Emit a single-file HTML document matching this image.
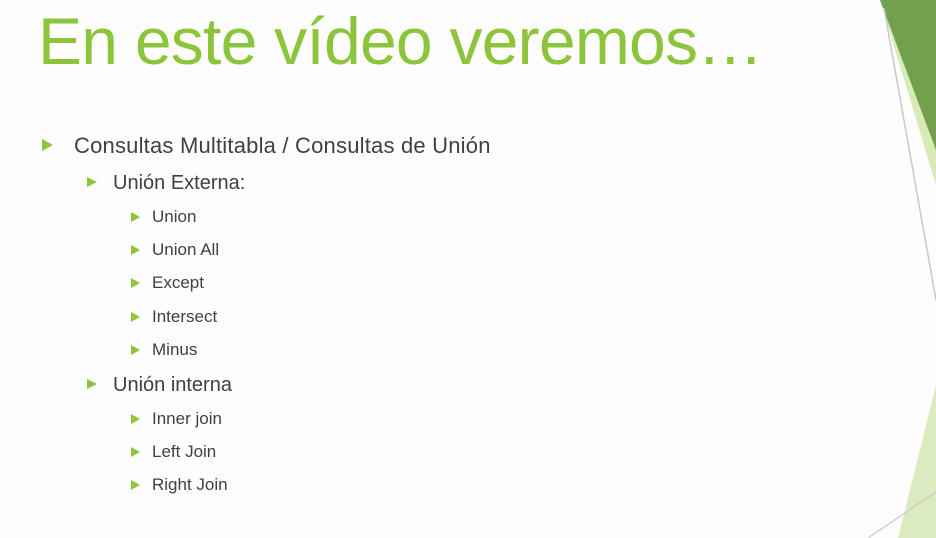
<!DOCTYPE html>
<html><head><meta charset="utf-8"><style>
html,body{margin:0;padding:0;}
body{width:936px;height:538px;background:#fdfdfd;position:relative;overflow:hidden;font-family:"Liberation Sans",sans-serif;color:#404040;}
.t{position:absolute;left:38px;top:3px;font-size:66px;color:#8cc43c;white-space:nowrap;letter-spacing:-0.75px;}
.i{position:absolute;white-space:nowrap;}
.b{position:absolute;width:0;height:0;border-top:6px solid transparent;border-bottom:6px solid transparent;border-left:11px solid #8cc43c;}
.b2{border-top:5.5px solid transparent;border-bottom:5.5px solid transparent;border-left:10px solid #8cc43c;}
.b3{border-top:5px solid transparent;border-bottom:5px solid transparent;border-left:9px solid #8cc43c;}
</style></head><body>
<svg width="936" height="538" style="position:absolute;left:0;top:0">
<polygon points="880,0 936,0 936,185" fill="#d8eab8"/>
<polygon points="880,0 936,0 936,150" fill="#72a04c"/>
<line x1="884" y1="8" x2="936" y2="300" stroke="#c8c8c8" stroke-width="1.5"/>
<polygon points="936,385 936,538 898,538" fill="#dcebbf"/>
<line x1="868" y1="538" x2="936" y2="492" stroke="#c8c8c8" stroke-width="1.2"/>
</svg>
<div class="t">En este vídeo veremos…</div>
<div class="b" style="left:42px;top:139px"></div>
<div class="i" style="left:74px;top:133px;font-size:22px;letter-spacing:0.2px">Consultas Multitabla / Consultas de Unión</div>
<div class="b b2" style="left:87px;top:177px"></div>
<div class="i" style="left:113px;top:172px;font-size:20px">Unión Externa:</div>
<div class="b b3" style="left:131px;top:212px"></div><div class="i" style="left:152px;top:207px;font-size:17px">Union</div>
<div class="b b3" style="left:131px;top:245px"></div><div class="i" style="left:152px;top:240px;font-size:17px">Union All</div>
<div class="b b3" style="left:131px;top:278px"></div><div class="i" style="left:152px;top:273px;font-size:17px">Except</div>
<div class="b b3" style="left:131px;top:312px"></div><div class="i" style="left:152px;top:307px;font-size:17px">Intersect</div>
<div class="b b3" style="left:131px;top:345px"></div><div class="i" style="left:152px;top:340px;font-size:17px">Minus</div>
<div class="b b2" style="left:87px;top:379px"></div>
<div class="i" style="left:113px;top:374px;font-size:20px">Unión interna</div>
<div class="b b3" style="left:131px;top:414px"></div><div class="i" style="left:152px;top:409px;font-size:17px">Inner join</div>
<div class="b b3" style="left:131px;top:447px"></div><div class="i" style="left:152px;top:442px;font-size:17px">Left Join</div>
<div class="b b3" style="left:131px;top:480px"></div><div class="i" style="left:152px;top:475px;font-size:17px">Right Join</div>
</body></html>
